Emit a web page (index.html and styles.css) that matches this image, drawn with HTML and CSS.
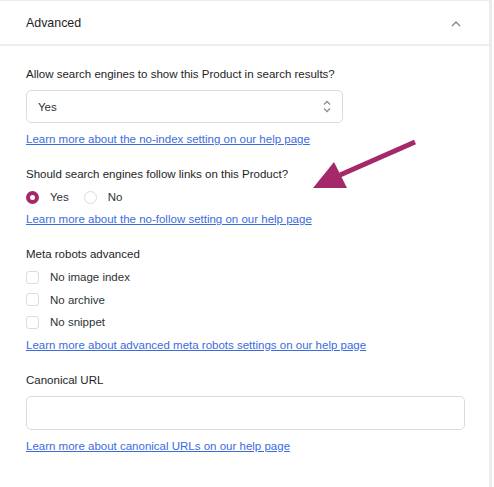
FILE: index.html
```html
<!DOCTYPE html>
<html>
<head>
<meta charset="utf-8">
<link rel="stylesheet" href="styles.css">
</head>
<body>
<div class="panel">
  <div class="header">
    <span class="title">Advanced</span>
    <svg class="chev" width="10" height="6" viewBox="0 0 10 6"><path d="M1 5 L5 1 L9 5" fill="none" stroke="#8c8f94" stroke-width="1.5"/></svg>
  </div>
  <div class="body">
    <div class="field">
      <div class="label">Allow search engines to show this Product in search results?</div>
      <div class="select">
        <span>Yes</span>
        <svg width="8" height="13" viewBox="0 0 8 13"><path d="M1 4.5 L4 1.5 L7 4.5 M1 8.5 L4 11.5 L7 8.5" fill="none" stroke="#8c8f94" stroke-width="1.3"/></svg>
      </div>
      <a class="link" href="#">Learn more about the no-index setting on our help page</a>
    </div>
    <div class="field">
      <div class="label tight">Should search engines follow links on this Product?</div>
      <div class="radios">
        <span class="opt"><span class="radio on"></span>Yes</span>
        <span class="opt"><span class="radio"></span>No</span>
      </div>
      <a class="link near" href="#">Learn more about the no-follow setting on our help page</a>
    </div>
    <div class="field f3">
      <div class="label tight">Meta robots advanced</div>
      <div class="checks">
        <span class="opt"><span class="box"></span>No image index</span>
        <span class="opt"><span class="box"></span>No archive</span>
        <span class="opt"><span class="box"></span>No snippet</span>
      </div>
      <a class="link" href="#">Learn more about advanced meta robots settings on our help page</a>
    </div>
    <div class="field">
      <div class="label">Canonical URL</div>
      <div class="input"></div>
      <a class="link" href="#">Learn more about canonical URLs on our help page</a>
    </div>
  </div>
  <svg class="arrow" width="120" height="60" viewBox="0 0 120 60">
    <path d="M115 12 L40 45" stroke="#a4286a" stroke-width="5" fill="none"/>
    <polygon points="13,58 34,32 47,58" fill="#a4286a"/>
  </svg>
</div>
</body>
</html>
```
FILE: styles.css
```css
html, body { margin: 0; padding: 0; background: #fff; }
body {
  font-family: "Liberation Sans", Arial, sans-serif;
  font-size: 11.5px;
  color: #1e1e1e;
}
.panel {
  position: relative;
  width: 492px;
  height: 487px;
  border-top: 1px solid #ececed;
  border-right: 3px solid #ececed;
  box-sizing: border-box;
}
.header {
  height: 45px;
  border-bottom: 2px solid #eeeeef;
  display: flex;
  align-items: center;
  justify-content: space-between;
  padding: 1px 28px 0 26px;
  box-sizing: border-box;
}
.title { font-size: 12.4px; color: #1e1e1e; }
.chev { margin-top: 1px; }
.body { padding: 20px 26px 0 26px; }
.field { display: flex; flex-direction: column; align-items: flex-start; margin-bottom: 19px; }
.field.f3 { margin-bottom: 19px; }
.label { font-weight: 500; color: #1e1e1e; line-height: 16px; margin-bottom: 8px; }
.label.tight { margin-bottom: 7px; }
.select {
  box-sizing: border-box;
  width: 317px; height: 33px;
  border: 1px solid #dcdcde; border-radius: 5px;
  display: flex; align-items: center; justify-content: space-between;
  padding: 0 11px 0 11px;
  color: #2c3338;
}
.link { color: #3c6be0; text-decoration: underline; line-height: 16px; margin-top: 8px; }
.link.near { margin-top: 6px; }
.radios { display: flex; align-items: center; height: 16px; gap: 15px; }
.opt { display: flex; align-items: center; gap: 11px; color: #2c3338; }
.radio { width: 13px; height: 13px; border-radius: 50%; border: 1px solid #dcdcde; box-sizing: border-box; }
.radio.on { border: 4px solid #a4286a; }
.checks { display: flex; flex-direction: column; gap: 6.5px; margin-bottom: -1px; }
.checks .opt { height: 16px; }
.box { width: 13px; height: 13px; border: 1px solid #dcdcde; border-radius: 3px; box-sizing: border-box; }
.input {
  box-sizing: border-box;
  width: 439px; height: 34px;
  border: 1px solid #dcdcde; border-radius: 5px;
}
.arrow { position: absolute; left: 300px; top: 129px; }
```
